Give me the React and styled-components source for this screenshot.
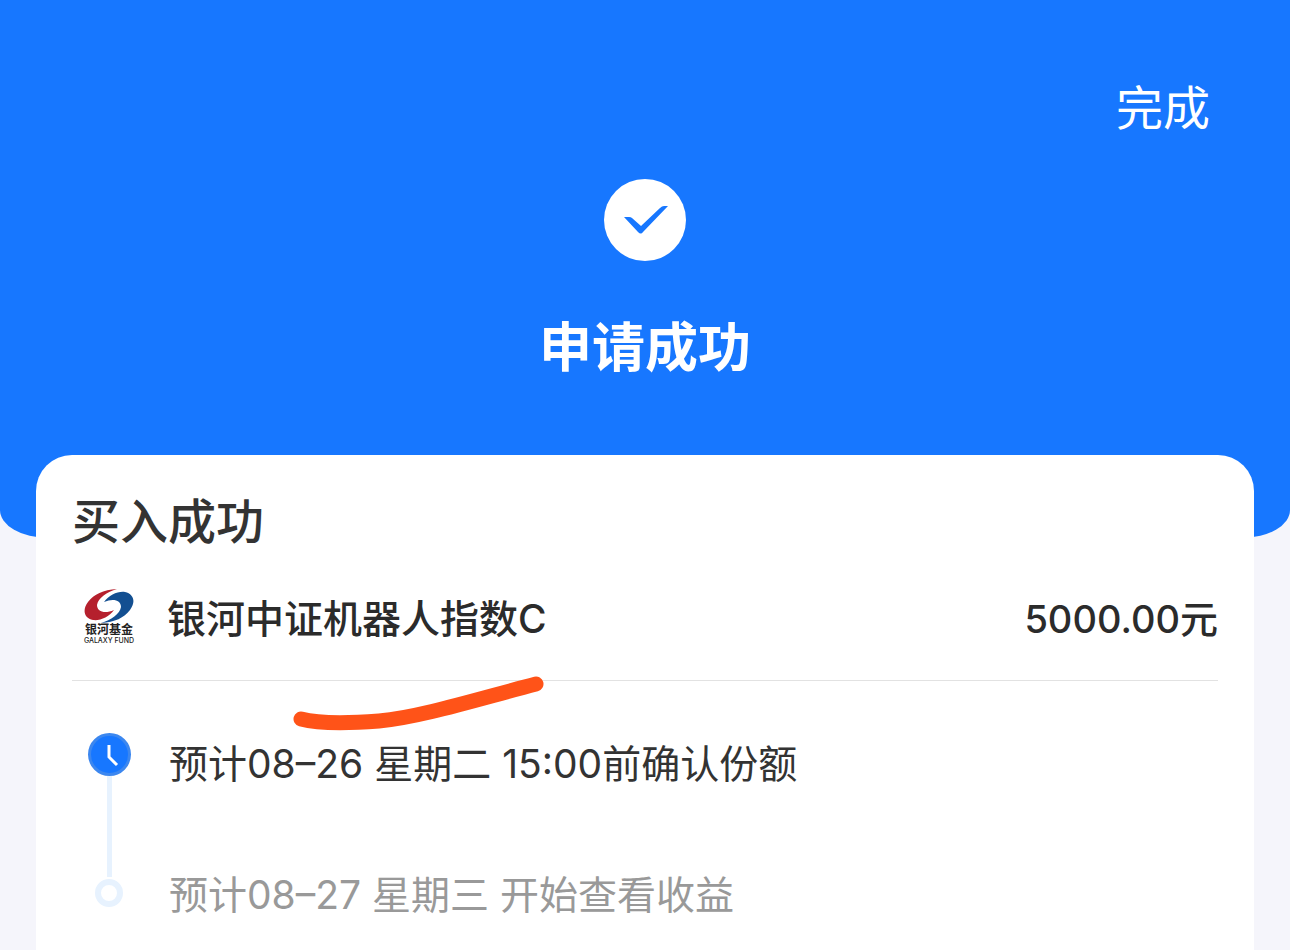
import React from "react";
import styled, { createGlobalStyle } from "styled-components";

const GlobalStyle = createGlobalStyle`
  * {
    box-sizing: border-box;
  }

  body {
    margin: 0;
    background-color: #f5f5fb;
    color: #333;
    font-family: Inter, "Noto Sans CJK SC", sans-serif;
  }
`;

const Page = styled.div`
  min-height: 100vh;
  display: flex;
  flex-direction: column;
`;

const Hero = styled.header`
  background-color: #1777ff;
  color: #fff;
  padding: 74px 80px 152px;
  border-radius: 0 0 48px 48px / 0 0 28px 28px;

  display: flex;
  flex-direction: column;
  align-items: center;
`;

const DoneButton = styled.button`
  align-self: flex-end;
  padding: 0;
  border: none;
  background: none;
  color: inherit;
  font-family: inherit;
  font-size: 47px;
  line-height: 68px;
  cursor: pointer;
`;

const SuccessIcon = styled.svg`
  width: 82px;
  height: 82px;
  margin-top: 37px;
`;

const HeroTitle = styled.h1`
  margin: 49px 0 0;
  font-size: 53px;
  font-weight: 700;
  line-height: 76px;
`;

const Card = styled.main`
  flex: 1;
  margin: -83px 36px 0;
  padding: 36px 36px 0;
  background-color: #fff;
  border-radius: 36px 36px 0 0;
`;

const CardTitle = styled.h2`
  margin: 0;
  font-size: 48px;
  font-weight: 500;
  line-height: 62px;
`;

const FundRow = styled.div`
  position: relative;
  display: flex;
  align-items: center;
  padding: 36px 0 31px;
  border-bottom: 1px solid #e2e2e2;
  font-size: 39px;
  font-weight: 500;
  line-height: 60px;
  color: #2b2b2b;
`;

const FundLogo = styled.div`
  width: 74px;
  height: 60px;
  margin-right: 21px;
  display: flex;
  flex-direction: column;
  align-items: center;
  color: #222;
`;

const LogoMark = styled.svg`
  width: 50px;
  height: 34px;
`;

const LogoName = styled.span`
  font-size: 12px;
  font-weight: 700;
  line-height: 14px;
`;

const LogoLatin = styled.span`
  font-size: 7px;
  font-weight: 500;
  line-height: 7px;
  white-space: nowrap;
`;

const FundName = styled.span`
  flex: 1;
`;

const Amount = styled.span`
  font-size: 38px;
`;

// hand-drawn underline that runs over the divider
const Marker = styled.svg`
  position: absolute;
  left: 216px;
  top: 118px;
  width: 260px;
  height: 64px;
  pointer-events: none;
`;

const Timeline = styled.ol`
  list-style: none;
  margin: 0;
  padding: 52px 0 0;
`;

const Step = styled.li`
  display: flex;
  min-height: 131px;
  font-size: 39px;
  line-height: 62px;
  color: ${({ $pending }) => ($pending ? "#999" : "#333")};
`;

const Rail = styled.div`
  width: 74px;
  margin-right: 23px;
  display: flex;
  flex-direction: column;
  align-items: center;
`;

const Line = styled.div`
  width: 5px;
  background-color: #e7f2fe;
  ${({ $short }) => ($short ? "height: 13px;" : "flex: 1;")}
`;

const ClockIcon = styled.svg`
  width: 43px;
  height: 43px;
`;

const Ring = styled.div`
  width: 28px;
  height: 28px;
  margin-top: 2px;
  border: 6px solid #e7f2fe;
  border-radius: 50%;
`;

// one half of the mark, the other is the same shape turned by 180deg
const swirl =
  "M20 13C25 6 34 2 41 3C50 5 52 13 46 21C40 29 31 33 17 34C27 31 36 25 37 18C37 11 29 9 20 13Z";

const GalaxyLogo = () => (
  <FundLogo>
    <LogoMark viewBox="0 0 50 34" aria-hidden="true">
      <path d={swirl} fill="#b5202d" transform="rotate(180 25 17)" />
      <path d={swirl} fill="#134f91" />
    </LogoMark>
    <LogoName>银河基金</LogoName>
    <LogoLatin>GALAXY FUND</LogoLatin>
  </FundLogo>
);

const App = () => {
  return (
    <Page>
      <GlobalStyle />
      <Hero>
        <DoneButton type="button">完成</DoneButton>
        <SuccessIcon viewBox="0 0 82 82" aria-hidden="true">
          <circle cx="41" cy="41" r="41" fill="#fff" />
          <path
            d="M20 38h5q2 0 3 1l9 8 19-18q2-2 4-2h4L39 53q-2 3-5 0Z"
            fill="#1777ff"
          />
        </SuccessIcon>
        <HeroTitle>申请成功</HeroTitle>
      </Hero>
      <Card>
        <CardTitle>买入成功</CardTitle>
        <FundRow>
          <GalaxyLogo />
          <FundName>银河中证机器人指数C</FundName>
          <Amount>5000.00元</Amount>
          <Marker viewBox="0 0 260 64" aria-hidden="true">
            <path
              d="M13 48C32 53 65 52 91 50C133 46 190 28 248 13"
              fill="none"
              stroke="#ff5318"
              strokeWidth="15"
              strokeLinecap="round"
            />
          </Marker>
        </FundRow>
        <Timeline>
          <Step>
            <Rail>
              <ClockIcon viewBox="0 0 43 43" aria-hidden="true">
                <circle cx="21.5" cy="21.5" r="20" fill="#1777ff" stroke="#3c87ef" strokeWidth="3" />
                <path d="M21 12v12l8 8" fill="none" stroke="#fff" strokeWidth="3" />
              </ClockIcon>
              <Line />
            </Rail>
            <span>预计08–26 星期二 15:00前确认份额</span>
          </Step>
          <Step $pending>
            <Rail>
              <Line $short />
              <Ring />
            </Rail>
            <span>预计08–27 星期三 开始查看收益</span>
          </Step>
        </Timeline>
      </Card>
    </Page>
  );
};

export default App;
